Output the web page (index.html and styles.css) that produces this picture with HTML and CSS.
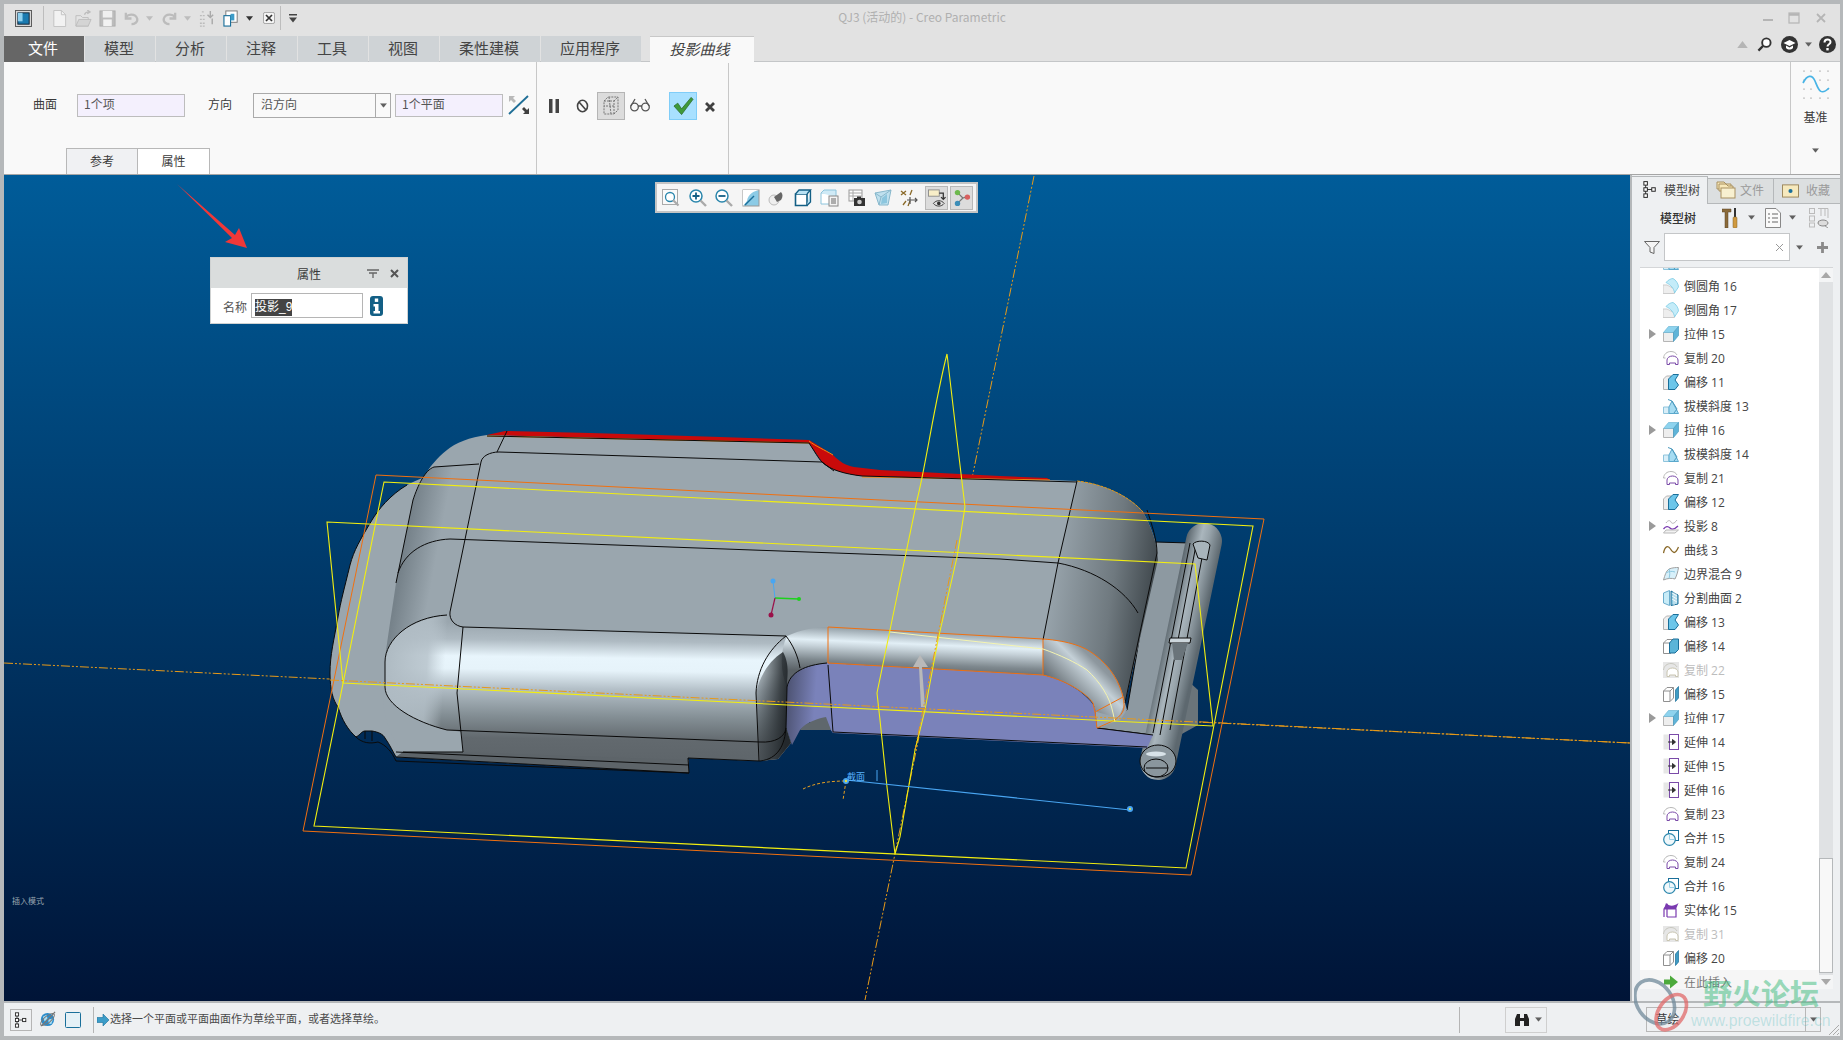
FILE: index.html
```html
<!DOCTYPE html>
<html lang="zh">
<head>
<meta charset="utf-8">
<title>QJ3 (活动的) - Creo Parametric</title>
<link rel="stylesheet" href="styles.css">
</head>
<body>
<svg class="defs" width="0" height="0">
  <defs>
    <symbol id="i-round" viewBox="0 0 16 16"><path d="M0 7V15.500H11.500V11C9 9.500 6 8 4 7Z" fill="#eeeeee" stroke="#cccccc"/><path d="M3 4.500C5 2 8 .5 10 .5C13 2 15.500 6 15.500 9L11.500 15C11 10.500 8 7 3 4.500Z" fill="#c4ecf9" stroke="#7ccbe4" stroke-width=".8"/></symbol>
    <symbol id="i-ext" viewBox="0 0 16 16"><path d="M.5 6.500V15.500H10.500V6.500Z" fill="#eeeeee" stroke="#b5b5b5"/><path d="M.5 6.500L5.500.5H15.500L10.500 6.500Z" fill="#8ed3ee" stroke="#6fb8d6" stroke-width=".7"/><path d="M10.500 6.500L15.500.5V9.500L10.500 15.500Z" fill="#5fb4d8" stroke="#4a9cc0" stroke-width=".7"/></symbol>
    <symbol id="i-copy" viewBox="0 0 16 16"><path d="M.5 8C1 4 4 1.500 8 1.500C11 1.500 13 3 14 5" fill="none" stroke="#b8b8b8"/><path d="M.5 8H2.500" stroke="#b8b8b8"/><path d="M4 14.500V10C4 7.500 7 6 9.500 6C12 6 15 7.500 15 10V14.500H12.500V13H6.500V14.500Z" fill="#fff" stroke="#7a4aa8"/></symbol>
    <symbol id="i-copyoff" viewBox="0 0 16 16"><rect width="16" height="16" fill="#e6e6e6"/><path d="M.5 8C1 4 4 1.500 8 1.500C11 1.500 13 3 14 5" fill="none" stroke="#c8c8c0"/><path d="M4 14.500V10C4 7.500 7 6 9.500 6C12 6 15 7.500 15 10V14.500H12.500V13H6.500V14.500Z" fill="#fff" stroke="#c8c4b0"/></symbol>
    <symbol id="i-off" viewBox="0 0 16 16"><path d="M.5 5L3.500 2H8V15.500H.5Z" fill="#eeeeee" stroke="#b5b5b5"/><path d="M5.500 5L10 .5L15.500 .5L12 6L15.500 11L12 15.500H5.500Z" fill="#6cc6ea" stroke="#1a6f9a"/></symbol>
    <symbol id="i-off2" viewBox="0 0 16 16"><path d="M.5 5L4 1.500H11V12L7.500 15.500H.5Z" fill="#fff" stroke="#909090"/><path d="M7.500 15.500V5H.5M7.500 5L11 1.500" fill="none" stroke="#909090"/><path d="M6.500 5L10 1H15.500V11.500L12 15H6.500Z" fill="#5ab4d8" stroke="#1a6f9a"/></symbol>
    <symbol id="i-off3" viewBox="0 0 16 16"><path d="M.5 5L4 1.500H10.500V12L7 15.500H.5Z" fill="#fff" stroke="#909090"/><path d="M7 15.500V5H.5M7 5L10.500 1.500" fill="none" stroke="#909090"/><path d="M12.500 4L15.500 .5V12L12.500 15.500Z" fill="#3f9cc4" stroke="#1a6f9a" stroke-width=".7"/></symbol>
    <symbol id="i-draft" viewBox="0 0 16 16"><path d="M.5 9H6V15.500H.5Z" fill="#d8eef8" stroke="#8ec4dc"/><path d="M6 15.500H15.500L9 3L6 9Z" fill="#a6dcf2" stroke="#5aa8cc"/><path d="M5 1.500L9 3L14 11L11 15" fill="none" stroke="#4a98bc"/></symbol>
    <symbol id="i-proj" viewBox="0 0 16 16"><path d="M3 5C5 2 7 2 8 4S11 6 14 2" fill="none" stroke="#b8b8b8"/><path d="M.5 11C3 8 5 8 7 10S11 12 15 8" fill="none" stroke="#7a3ab0" stroke-width="1.300"/><path d="M.5 15L3 12H15.500L12 15Z" fill="#f2f2f2" stroke="#b8b8b8"/></symbol>
    <symbol id="i-curve" viewBox="0 0 16 16"><path d="M.5 11C2 4 5 3 7.500 7S12 13 15.500 5" fill="none" stroke="#8a6a2a" stroke-width="1.300"/></symbol>
    <symbol id="i-blend" viewBox="0 0 16 16"><path d="M.5 14C2 9 3 5 6 3C10 1.500 13 1.500 15.500 1.500C15 5 14 9 12 13C9 12 5 12 .5 14Z" fill="#d8f0fa" stroke="#a0a0a0"/><path d="M6 3C7 6 7 9 6 12.500M12 6C9 5 6 5 3 7" fill="none" stroke="#8cc8e0"/></symbol>
    <symbol id="i-split" viewBox="0 0 16 16"><path d="M.5 3L6.500 .5V15.500L.5 13Z" fill="#c8ecf8" stroke="#6aaccc"/><path d="M8 1L15 5V14L8 15.500Z" fill="#8cc8e0" stroke="#1a6f9a"/><path d="M9 3L14 6M9 6L14 9M9 9L14 12M11 2V15M13 3V14" stroke="#fff" stroke-width=".8"/></symbol>
    <symbol id="i-trim" viewBox="0 0 16 16"><rect x=".5" y=".5" width="6" height="15" fill="#e6e6e6"/><rect x="6.500" y=".5" width="9" height="15" fill="#fff" stroke="#7a4aa8"/><path d="M5 8H12M9.500 5.500L12.500 8L9.500 10.500Z" fill="#333" stroke="#333"/></symbol>
    <symbol id="i-merge" viewBox="0 0 16 16"><rect x="5.500" y=".5" width="10" height="10" fill="#fff" stroke="#1a6f9a"/><circle cx="6.500" cy="9.500" r="5.800" fill="#f0f8fb" stroke="#2a86ac" stroke-width="1.200"/><path d="M6.500 4V9.500H12" fill="none" stroke="#9ad0e6"/></symbol>
    <symbol id="i-solid" viewBox="0 0 16 16"><path d="M1 15V7L4 3V15M1 7H13V15H4" fill="#fff" stroke="#7a3ab0" stroke-width="1.200"/><path d="M1 7L3 1C6 4 10 5 15.500 1L13 7Z" fill="#7a3ab0"/></symbol>
    <symbol id="i-insert" viewBox="0 0 16 16"><path d="M7 1.500L15 8L7 14.500V10.500H1V5.500H7Z" fill="#4caa3c"/></symbol>
    <symbol id="i-down" viewBox="0 0 8 5"><path d="M0 0H8L4 5Z" fill="#606060"/></symbol>
    <symbol id="i-tree" viewBox="0 0 16 20"><g fill="#fff" stroke="#222" stroke-width="1.100"><rect x="1" y="1" width="4" height="4"/><rect x="1" y="8" width="4" height="4"/><rect x="1" y="15" width="4" height="4"/><rect x="10" y="8" width="4" height="4"/></g><path d="M3 5V8M3 12V15M5 10H10" stroke="#222"/></symbol>
    <symbol id="i-folder" viewBox="0 0 20 18"><path d="M1 1H8L10 3H15V8H1Z" fill="#f8e8b8" stroke="#a89060"/><path d="M3 3H10L12 5H17V10H3Z" fill="#f8e8b8" stroke="#a89060"/><rect x="5" y="7" width="14" height="10" fill="#f8f0d0" stroke="#a89060"/></symbol>
  </defs>
</svg>

<div class="app">
  <header class="titlebar">
    <div class="quick">
      <svg class="ic18 qlogo" viewBox="0 0 18 18"><rect x=".5" y=".5" width="17" height="17" fill="#d8d8d8" stroke="#555"/><rect x="3" y="3" width="12" height="12" fill="#1a7ab0" stroke="#123"/><rect x="3" y="3" width="5" height="9" fill="#8fd0ee"/></svg>
      <span class="qsep"></span>
      <svg class="ic18" viewBox="0 0 18 18"><path d="M3 .5H11L15.500 5V17.500H3Z" fill="#f2f2f2" stroke="#c2c2c2"/><path d="M11 .5V5H15.500" fill="none" stroke="#c2c2c2"/></svg>
      <svg class="ic18" viewBox="0 0 18 18"><path d="M1 17V6H6L8 8H14V17Z" fill="#e4e4e4" stroke="#bdbdbd"/><path d="M1 17L4 10H17L14 17Z" fill="#d4d4d4" stroke="#bdbdbd"/><path d="M10 5C11 2 13 2 15 2M13 0L16 2L13 4" fill="none" stroke="#bdbdbd" stroke-width="1.300"/></svg>
      <svg class="ic18" viewBox="0 0 18 18"><rect x="1" y="1" width="16" height="16" fill="#bcbcbc" stroke="#adadad"/><rect x="4" y="1" width="10" height="7" fill="#efefef"/><rect x="4.500" y="10" width="9" height="7" fill="#f2f2f2"/></svg>
      <svg class="ic18" viewBox="0 0 18 18"><path d="M3 9C4 4 13 3 15 9C16 13 12 15 9 15M3 3V9H9" fill="none" stroke="#bcbcbc" stroke-width="2.400"/></svg>
      <svg class="ic8" viewBox="0 0 8 5"><path d="M0 0H8L4 5Z" fill="#bdbdbd"/></svg>
      <svg class="ic18" viewBox="0 0 18 18"><path d="M15 9C14 4 5 3 3 9C2 13 6 15 9 15M15 3V9H9" fill="none" stroke="#bcbcbc" stroke-width="2.400"/></svg>
      <svg class="ic8" viewBox="0 0 8 5"><path d="M0 0H8L4 5Z" fill="#bdbdbd"/></svg>
      <svg class="ic18" viewBox="0 0 18 18"><path d="M1 6H7M1 10H7M1 14H7M1 17H7M3 2H6" stroke="#bbb" stroke-width="1.400" stroke-dasharray="2 1"/><path d="M12 1V8M9 5L12 8L15 5M14 15V9" fill="none" stroke="#aaa" stroke-width="1.500"/></svg>
      <svg class="ic18" viewBox="0 0 18 18"><rect x="3" y="1" width="12" height="12" fill="#fff" stroke="#777"/><rect x="1" y="6" width="7" height="11" fill="#fff" stroke="#1a6f9a" stroke-width="1.200"/><rect x="8" y="4" width="4" height="7" fill="#3c9cc8"/></svg>
      <svg class="ic8" viewBox="0 0 8 5"><path d="M0 0H8L4 5Z" fill="#333"/></svg>
      <svg class="ic14" viewBox="0 0 14 14"><rect x=".5" y=".5" width="13" height="13" rx="2" fill="#f4f4f4" stroke="#999"/><path d="M3.500 3.500L10.500 10.500M10.500 3.500L3.500 10.500" stroke="#333" stroke-width="2"/></svg>
      <span class="qsep qsep-b"></span>
      <svg class="qmore" viewBox="0 0 8 9"><path d="M0 0H8V1.500H0ZM0 3.500H8L4 8.500Z" fill="#444"/></svg>
    </div>
    <div class="apptitle">QJ3 (活动的) - Creo Parametric</div>
    <div class="winctl">
      <svg class="ic12" viewBox="0 0 12 12"><path d="M2 8H12" stroke="#b5b5b5" stroke-width="2"/></svg>
      <svg class="ic12" viewBox="0 0 12 12"><rect x="1" y="1" width="10" height="10" fill="none" stroke="#b5b5b5" stroke-width="1.200"/><path d="M1 2.500H11" stroke="#b5b5b5" stroke-width="2.500"/></svg>
      <svg class="ic12" viewBox="0 0 12 12"><path d="M2 2L10 10M10 2L2 10" stroke="#b5b5b5" stroke-width="1.800"/></svg>
    </div>
  </header>

  <nav class="tabbar">
    <span class="tab tab-file">文件</span>
    <span class="tab">模型</span>
    <span class="tab">分析</span>
    <span class="tab">注释</span>
    <span class="tab">工具</span>
    <span class="tab">视图</span>
    <span class="tab tab-wide">柔性建模</span>
    <span class="tab tab-wide">应用程序</span>
    <span class="tab tab-active">投影曲线</span>
    <span class="tabtools">
      <svg class="tt-up" viewBox="0 0 12 8"><path d="M0 8L6 0L12 8Z" fill="#b5b5b5"/></svg>
      <svg class="tt-lens" viewBox="0 0 16 16"><circle cx="10" cy="6" r="4.500" fill="#fff" stroke="#333" stroke-width="2"/><path d="M6.500 9.500L1.500 14.500" stroke="#333" stroke-width="2.400"/></svg>
      <svg class="tt-cap" viewBox="0 0 17 17"><circle cx="8.500" cy="8.500" r="8.500" fill="#333"/><path d="M2.500 7L8.500 4L14.500 7L8.500 10Z" fill="#fff"/><path d="M5 9.500V12C7 14 10 14 12 12V9.500L8.500 11.500Z" fill="#fff"/></svg>
      <svg class="tt-ar" viewBox="0 0 8 5"><use href="#i-down"/></svg>
      <svg class="tt-help" viewBox="0 0 17 17"><circle cx="8.500" cy="8.500" r="8.500" fill="#333"/><path d="M5.500 6.500C5.500 2.500 11.500 2.500 11.500 6C11.500 8.500 8.500 8 8.500 10.500" fill="none" stroke="#fff" stroke-width="2"/><rect x="7.300" y="12" width="2.400" height="2.400" fill="#fff"/></svg>
    </span>
  </nav>

  <section class="ribbon">
    <div class="rgroup rg-main">
      <div class="controls">
        <span class="lbl lbl-a">曲面</span>
        <span class="field">1个项</span>
        <span class="lbl lbl-b">方向</span>
        <span class="select">沿方向<i class="sel-ar"><svg viewBox="0 0 8 5"><use href="#i-down"/></svg></i></span>
        <span class="field field-c">1个平面</span>
        <svg class="flip" viewBox="0 0 22 20"><path d="M20 1L1 19" stroke="#1f6e96" stroke-width="1.800"/><path d="M1 7V1H7L5 3L8 6L6 8L3 5Z" fill="#b9b9b9"/><path d="M21 13V19H15L17 17L14 14L16 12L19 15Z" fill="#404040"/></svg>
      </div>
      <div class="subtabs">
        <span class="subtab">参考</span>
        <span class="subtab subtab-on">属性</span>
      </div>
    </div>
    <div class="rgroup rg-actions">
      <svg class="a-pause" viewBox="0 0 12 14"><path d="M1 0H4.500V14H1ZM7.500 0H11V14H7.500Z" fill="#444"/></svg>
      <svg class="a-no" viewBox="0 0 13 14"><ellipse cx="6.500" cy="7" rx="5" ry="5.800" fill="none" stroke="#444" stroke-width="1.600"/><path d="M3 3L10 11" stroke="#444" stroke-width="1.600"/></svg>
      <span class="a-box"><svg viewBox="0 0 20 20"><path d="M3 5L7 1H17V14L13 18H3Z M3 5H13V18 M13 5L17 1 M8 1L10 18 M13 10L3 10" fill="none" stroke="#777" stroke-dasharray="2 1"/></svg></span>
      <svg class="a-glass" viewBox="0 0 20 14"><circle cx="4.500" cy="9" r="3.800" fill="none" stroke="#555" stroke-width="1.300"/><circle cx="15.500" cy="9" r="3.800" fill="none" stroke="#555" stroke-width="1.300"/><path d="M8 8H12M1 8L5 1M19 8L15 1" fill="none" stroke="#555" stroke-width="1.300"/></svg>
      <span class="a-ok"><svg viewBox="0 0 22 20"><path d="M1 10L5 7L9 13L19 1L21 3L9 19Z" fill="#3f9a3a" stroke="#2c6a2a" stroke-width=".8"/></svg></span>
      <svg class="a-x" viewBox="0 0 12 12"><path d="M2 2L10 10M10 2L2 10" stroke="#404040" stroke-width="2.800"/></svg>
    </div>
    <div class="rgroup rg-fill"></div>
    <div class="rg-datum">
      <svg class="datum-ic" viewBox="0 0 28 30"><g fill="#666"><circle cx="2" cy="1" r=".6"/><circle cx="9" cy="1" r=".6"/><circle cx="18" cy="1" r=".6"/><circle cx="26" cy="1" r=".6"/><circle cx="2" cy="10" r=".6"/><circle cx="18" cy="10" r=".6"/><circle cx="26" cy="10" r=".6"/><circle cx="2" cy="19" r=".6"/><circle cx="9" cy="19" r=".6"/><circle cx="26" cy="19" r=".6"/><circle cx="2" cy="28" r=".6"/><circle cx="9" cy="28" r=".6"/><circle cx="18" cy="28" r=".6"/><circle cx="26" cy="28" r=".6"/></g><path d="M1 13C5 5 10 4 13 11S18 27 27 18" fill="none" stroke="#48b4e6" stroke-width="1.700"/></svg>
      <span class="datum-lbl">基准</span>
      <svg class="datum-ar" viewBox="0 0 8 5"><use href="#i-down"/></svg>
    </div>
  </section>

  <main class="workspace">
    <div class="viewport">
      <svg class="scene" viewBox="4 175 1626 826">
        <defs>
          <linearGradient id="tube" gradientUnits="userSpaceOnUse" x1="600" y1="624" x2="598" y2="765"><stop offset="0" stop-color="#9aa6ae"/><stop offset=".12" stop-color="#aebac2"/><stop offset=".24" stop-color="#e8f5fc"/><stop offset=".33" stop-color="#e6f3fa"/><stop offset=".46" stop-color="#b4c0c8"/><stop offset=".66" stop-color="#838e94"/><stop offset=".82" stop-color="#62696e"/><stop offset="1" stop-color="#5d6469"/></linearGradient>
          <linearGradient id="tube2" gradientUnits="userSpaceOnUse" x1="930" y1="630" x2="928" y2="676"><stop offset="0" stop-color="#8a969e"/><stop offset=".32" stop-color="#e2eff6"/><stop offset=".45" stop-color="#c6d2d9"/><stop offset=".75" stop-color="#7e888e"/><stop offset="1" stop-color="#5a6166"/></linearGradient>
          <linearGradient id="tube3" gradientUnits="userSpaceOnUse" x1="1065" y1="695" x2="1110" y2="650"><stop offset="0" stop-color="#666e74"/><stop offset=".5" stop-color="#c4d0d7"/><stop offset=".7" stop-color="#8e989f"/><stop offset="1" stop-color="#7a848a"/></linearGradient>
          <linearGradient id="endR" gradientUnits="userSpaceOnUse" x1="1050" y1="560" x2="1158" y2="575"><stop offset="0" stop-color="#9aa6ae"/><stop offset=".6" stop-color="#6f797f"/><stop offset="1" stop-color="#3e464b"/></linearGradient>
          <linearGradient id="shoulder" gradientUnits="userSpaceOnUse" x1="400" y1="575" x2="432" y2="581"><stop offset="0" stop-color="#76828a"/><stop offset="1" stop-color="#9aa6ae"/></linearGradient>
          <linearGradient id="tubeL" gradientUnits="userSpaceOnUse" x1="385" y1="660" x2="445" y2="664"><stop offset="0" stop-color="#aebac2"/><stop offset=".7" stop-color="#b4c0c8" stop-opacity=".8"/><stop offset="1" stop-color="#c0ccd4" stop-opacity="0"/></linearGradient>
          <linearGradient id="tubeR" gradientUnits="userSpaceOnUse" x1="745" y1="700" x2="788" y2="703"><stop offset="0" stop-color="#3a4146" stop-opacity="0"/><stop offset=".8" stop-color="#2e3438" stop-opacity=".9"/><stop offset="1" stop-color="#23282c"/></linearGradient>
          <linearGradient id="purple" gradientUnits="userSpaceOnUse" x1="787" y1="700" x2="815" y2="702"><stop offset="0" stop-color="#4e5474"/><stop offset="1" stop-color="#7a82ba"/></linearGradient>
          <linearGradient id="pin" gradientUnits="userSpaceOnUse" x1="1163" y1="640" x2="1198" y2="648"><stop offset="0" stop-color="#5b666d"/><stop offset=".4" stop-color="#aab6bd"/><stop offset=".6" stop-color="#98a4ab"/><stop offset="1" stop-color="#5d686f"/></linearGradient>
        </defs>

        <g class="axis">
          <path d="M4 663L1630 743"/>
          <path d="M1034 176L865 1000"/>
        </g>

        <!-- hinge -->
        <path d="M1187 680L1198 690L1198 725L1180 735Z" fill="#6a747a"/>
        <path class="eg" d="M1156 542L1190 543L1153 735L1097 728L1127 710Z" fill="#8d99a1"/>
        <line x1="1204" y1="541" x2="1158" y2="762" stroke="url(#pin)" stroke-width="36" stroke-linecap="round"/>
        <path class="ln" d="M1190 543L1153 733M1196 545L1160 735M1204 547L1170 730"/>
        <path class="eg" d="M1193 544C1196 540 1208 540 1210 545L1207 560L1198 558Z" fill="#a8b4bb"/>
        <path class="eg" d="M1170 638H1191L1190 643H1169Z" fill="#ccd6dc"/>
        <path d="M1172 643H1188L1182 660H1174Z" fill="#6a747a"/>
        <ellipse class="eg" cx="1158" cy="761" rx="18" ry="16" fill="#8a969d"/>
        <ellipse cx="1156" cy="754" rx="10" ry="2.500" fill="#d8e2e8"/>
        <ellipse class="ln" cx="1156" cy="768" rx="12" ry="9"/>
        <path class="ln" d="M1146 768H1168"/>

        <!-- body -->
        <path fill="#9aa6ae" d="M487 435L809 443C815 452 818 458 822 462C830 470 845 474 862 476L1050 480L1077 481C1105 484 1130 497 1143 512C1150 525 1157 540 1158 560L1125 703L1127 710L1120 720L1097 728L1095 707L1087 693L1067 680L1043 675L827 663C805 665 790 672 787 687L786 727L791 743L778 759L760 761L688 758L689 773L396 757C393 752 390 745 385 738C383 734 378 732 372 731H365C362 731 360 735 356 737C348 730 342 720 338 707C333 700 330 690 330 673C330 655 334 640 338 617C341 600 344 590 350 565C354 550 360 540 372 520C378 510 390 495 407 485C412 482 418 480 425 477C428 468 437 458 447 450C455 443 470 437 487 435Z"/>
        <!-- purple underside -->
        <path fill="url(#purple)" d="M787 687C790 672 805 665 827 663L1043 675C1065 680 1085 692 1095 707L1097 728L1153 735L1147 748L833 733L826 724L810 722L800 730L792 745L786 727Z"/>
        <path class="ln" d="M833 732L1147 747M1097 728L1153 735"/>
        <path fill="#5f676c" d="M800 730C805 722 820 718 826 717L831 730Z"/>
        <!-- shoulder + right end -->
        <path fill="url(#shoulder)" d="M434 467C425 470 418 485 413 500L396 583C392 610 388 635 385 658C395 640 420 620 447 615L481 462Z"/>
        <path fill="url(#endR)" d="M1077 481C1105 484 1130 497 1143 512C1150 525 1157 540 1158 560L1125 703C1110 670 1075 645 1043 640L1058 563Z"/>
        <!-- left tube -->
        <path fill="url(#tube)" d="M385 662C385 640 410 617 449 616C450 625 455 627 463 627L787 636L786 727L791 743L778 759L760 761L688 758L689 773L396 757L403 752L463 752L461 732L447 730C415 722 385 705 385 687Z"/>
        <path fill="url(#tubeL)" d="M385 662C385 640 410 617 449 616L457 693L455 732L447 730C415 722 385 705 385 687Z"/>
        <path fill="#5d6469" d="M396 757L403 752H461L689 760V773Z"/>
        <path fill="#9aa6ae" d="M385 687C385 705 415 722 447 730L461 732L463 752H403C385 730 380 700 385 687Z"/>
        <!-- corner -->
        <path fill="url(#tube2)" d="M787 636C800 630 815 627 829 627L828 663C805 665 790 672 787 687C780 672 780 650 787 636Z"/>
        <path fill="url(#tubeR)" d="M756 693C760 675 770 660 783 652C790 665 787 675 787 687L786 727L791 743L778 759L760 761Z"/>
        <!-- right tube -->
        <path fill="url(#tube2)" d="M828 627L1043 639L1043 675L827 663Z"/>
        <path fill="url(#tube3)" d="M1043 639C1070 641 1085 647 1095 655C1110 666 1120 680 1125 703L1118 718L1097 712L1093 703C1085 692 1065 680 1043 675Z"/>
        <!-- red band -->
        <path fill="#c90a0a" d="M487 435L505 431L590 433L657 435L720 437L809 440C818 445 825 450 833 455C840 462 845 465 854 467L880 470L1000 476L1047 478L1050 480L862 476C845 474 830 470 822 462L809 443Z"/>
        <path d="M487 436L809 443M809 441C815 446 825 450 833 455M862 477L1050 480" fill="none" stroke="#ee8a10"/>
        <path d="M1077 481C1105 484 1130 497 1143 512" fill="none" stroke="#e8980e" stroke-dasharray="3 1"/>

        <!-- model edges -->
        <g class="ln">
          <path d="M507 431L497 452"/>
          <path d="M809 443C815 452 818 458 822 462C830 470 845 474 862 476M487 436L809 443"/>
          <path d="M862 476L1077 482M822 462L834 471"/>
          <path d="M499 452L822 462"/>
          <path d="M499 452C490 452 482 456 481 462L450 612C449 620 455 626 463 627L786 636"/>
          <path d="M479 464L434 467C425 470 418 485 413 500L396 583"/>
          <path d="M398 573C405 552 425 540 450 539L1000 559L1058 563C1095 570 1125 590 1138 613"/>
          <path d="M1077 481L1058 563L1043 640"/>
          <path d="M447 615C410 617 385 640 385 662V687C385 705 415 722 447 730L760 742C775 743 785 737 786 728"/>
          <path d="M463 627L457 693L463 752H403"/>
          <path d="M786 636C768 650 757 670 756 693L759 761"/>
          <path d="M786 636C793 645 798 656 800 668"/>
          <path d="M787 687C790 672 805 665 827 663M787 687L786 727C785 745 778 759 760 761L688 758L689 773L396 757C393 752 390 745 385 738C383 734 378 732 372 731H365C362 731 360 735 356 737C348 730 342 720 338 707"/>
          <path d="M828 665L833 732"/>
          <path d="M396 752L689 765M365 731V739M372 731V741M356 737C362 743 370 744 378 742C386 745 392 752 396 761L689 773"/>
          <path d="M338 707C333 700 330 690 330 673C330 655 334 640 338 617C341 600 344 590 350 565C354 550 360 540 372 520C378 510 390 495 407 485"/>
          <path d="M1147 510C1152 525 1157 540 1157 553L1125 703" stroke-width="1.500"/>
        </g>

        <!-- orange on tube -->
        <g class="org">
          <path d="M828 627L1043 639C1070 641 1085 647 1095 655C1110 666 1120 683 1123 697C1125 708 1125 712 1115 720L1097 728L1095 712L1123 697"/>
          <path d="M828 663L1043 675C1065 680 1085 692 1093 703L1095 712"/>
          <path d="M828 627V663M1043 639V675"/>
        </g>
        <path d="M890 632L1043 649C1060 655 1075 662 1087 670C1100 682 1110 697 1113 713L1115 722" fill="none" stroke="#f4f4b0"/>

        <!-- grey arrow -->
        <path d="M925 707L922 667H928L920 655L913 667H919L921 707Z" fill="#b9b9b9"/>

        <!-- planes -->
        <path class="org" d="M376 475L1264 519L1191 875L303 831Z"/>
        <path class="yel" d="M384 482L1253 526L1186 868L314 826Z"/>
        <path class="yel" d="M327 522L1195 564L1213 726L343 683Z"/>
        <path class="yel" d="M947 354C935 400 925 470 917 500L890 630L877 693L880 720L887 787L895 854L900 837L915 750L925 710L938 640L957 557L965 507L957 440Z"/>
        <path class="axis axis-over" d="M330 680L1630 743M957 540L915 750"/>

        <!-- sketch helpers -->
        <path d="M846 780L1130 810" fill="none" stroke="#49a6f2" stroke-width="1.100"/>
        <path d="M803 789C815 783 830 781 846 781M846 781L843 800" fill="none" stroke="#e8a020" stroke-dasharray="3 2"/>
        <circle cx="846" cy="781" r="3" fill="#49a6f2"/><circle cx="846" cy="781" r="1.200" fill="#e8e040"/>
        <circle cx="1130" cy="809" r="3" fill="#49a6f2"/><circle cx="1130" cy="809" r="1.100" fill="#e8e040"/>
        <path d="M877 770V781" stroke="#49a6f2"/>
        <text class="lbltxt" x="847" y="780">截面</text>

        <!-- coordinate system -->
        <path d="M775 598L773 581" stroke="#49a6f2" stroke-width="1"/>
        <path d="M775 598L799 599" stroke="#1dd11d" stroke-width="1.500"/>
        <path d="M775 598L771 615" stroke="#9a1048" stroke-width="1.200"/>
        <circle cx="773" cy="581" r="2.500" fill="#49a6f2"/>
        <circle cx="799" cy="599" r="2" fill="#1dd11d"/>
        <circle cx="771" cy="615" r="2.500" fill="#9a1048"/>
      </svg>

      <svg class="redarrow" viewBox="0 0 74 70"><path d="M2 2L60 53L64 46L72 66L50 60L57 56Z" fill="#f03838"/></svg>

      <div class="viewbar">
        <span class="vb"><svg viewBox="0 0 18 18"><rect x=".5" y=".5" width="15" height="15" fill="#fafafa" stroke="#aaa"/><circle cx="8" cy="8" r="4.500" fill="#fff" stroke="#2a86ac" stroke-width="1.300"/><path d="M11 11L16.500 16.500" stroke="#aaa" stroke-width="2.200"/></svg></span>
        <span class="vb"><svg viewBox="0 0 18 18"><circle cx="7" cy="7" r="6" fill="#fff" stroke="#2a86ac" stroke-width="1.500"/><path d="M7 3.500V10.500M3.500 7H10.500" stroke="#135f85" stroke-width="1.800"/><path d="M11.500 11.500L17 17" stroke="#aaa" stroke-width="2.400"/></svg></span>
        <span class="vb"><svg viewBox="0 0 18 18"><circle cx="7" cy="7" r="6" fill="#fff" stroke="#2a86ac" stroke-width="1.500"/><path d="M3.500 7H10.500" stroke="#135f85" stroke-width="1.800"/><path d="M11.500 11.500L17 17" stroke="#aaa" stroke-width="2.400"/></svg></span>
        <span class="vb"><svg viewBox="0 0 18 18"><rect x="1" y="1" width="16" height="16" fill="#8ccbe6" stroke="#999"/><path d="M1 1H17C12 2 6 5 5 12L1 17Z" fill="#fff"/><path d="M3 16L12 7" stroke="#1a6f9a" stroke-width="1.500"/></svg></span>
        <span class="vb vb-m"><svg viewBox="0 0 20 18"><circle cx="7" cy="11" r="5" fill="#eee" stroke="#bbb"/><path d="M7 8L14 3C16 5 16 8 14 11L10 13Z" fill="#666"/></svg></span>
        <span class="vb vb-m"><svg viewBox="0 0 20 18"><path d="M1.500 5H13V16.500H1.500Z" fill="#fff" stroke="#135f85" stroke-width="1.600"/><path d="M1.500 5L5 1H16.500L13 5M13 16.500L16.500 13V1" fill="#b8e2f4" stroke="#135f85" stroke-width="1.300"/></svg></span>
        <span class="vb vb-m"><svg viewBox="0 0 20 18"><path d="M1 4H13V15H1Z" fill="#fff" stroke="#8cc4dc"/><path d="M1 4L4 1H16V8" fill="#cfeaf6" stroke="#8cc4dc"/><rect x="9" y="7" width="9" height="10" fill="#f4f4f4" stroke="#888"/><path d="M11 10H16M11 12H16M11 14H16" stroke="#666"/></svg></span>
        <span class="vb"><svg viewBox="0 0 18 18"><rect x="1" y="1" width="13" height="11" fill="#fff" stroke="#999"/><path d="M1 4H14M1 7H14M5 1V12" stroke="#aaa"/><rect x="6" y="9" width="11" height="8" fill="#333"/><rect x="9" y="7.500" width="4" height="2" fill="#333"/><circle cx="11.500" cy="13" r="2.300" fill="#ccc"/></svg></span>
        <span class="vb"><svg viewBox="0 0 18 18"><path d="M1 4L17 1L14 16H5Z" fill="#bfe0ee" stroke="#88b8cc"/><path d="M1 4L7 8L17 1M7 8L5 16" fill="none" stroke="#88b8cc"/><path d="M8 9L13 5V14L7 15Z" fill="#8cc6de"/></svg></span>
        <span class="vb vb-m"><svg viewBox="0 0 20 18"><path d="M1 2L6 6M6 2L1 6M12 1L10 6M3 16L6 12M8 17L10 12" stroke="#8a6a2a" stroke-width="1.300"/><path d="M10 8V15M7 11H17M15 9L17 11L15 13" fill="none" stroke="#555" stroke-width="1.200"/></svg></span>
        <span class="vb vb-box"><svg viewBox="0 0 20 20"><rect x=".5" y="1" width="12" height="7" fill="#f8eec8" stroke="#8a8a8a"/><path d="M12.500 4.500H17V11M14.500 9L17 11.500L19.500 9" fill="none" stroke="#333" stroke-width="1.400"/><path d="M6 16C9 12 15 12 18 16C15 20 9 20 6 16Z" fill="#ddd" stroke="#333"/><circle cx="12" cy="16" r="2" fill="#333"/></svg></span>
        <span class="vb vb-box vb-box2"><svg viewBox="0 0 20 20"><path d="M5 4L11 10L14 9M11 10L5 16" fill="none" stroke="#777" stroke-width="1.300"/><circle cx="5" cy="4" r="3" fill="#6cb84c"/><circle cx="5" cy="16" r="3" fill="#3c8eb8"/><circle cx="16" cy="9" r="3" fill="#d86060"/></svg></span>
      </div>

      <div class="dialog">
        <div class="dlg-head">
          <span class="dlg-title">属性</span>
          <svg class="dlg-pin" viewBox="0 0 12 9"><path d="M0 1H12M2 4H10M6 4V9" stroke="#666" stroke-width="1.300"/></svg>
          <svg class="dlg-x" viewBox="0 0 9 9"><path d="M1 1L8 8M8 1L1 8" stroke="#555" stroke-width="2"/></svg>
        </div>
        <div class="dlg-body">
          <span class="dlg-lbl">名称</span>
          <span class="dlg-input"><span class="dlg-sel">投影_9</span></span>
          <svg class="dlg-info" viewBox="0 0 13 20"><rect width="13" height="20" rx="3" fill="#135f85"/><rect x="4.800" y="2.500" width="3.400" height="3.400" fill="#fff"/><path d="M3.500 8H8.500V15H10V17.500H3.500V15H5V10.500H3.500Z" fill="#fff"/></svg>
        </div>
      </div>

      <span class="modetxt">插入模式</span>
    </div>

    <aside class="panel">
      <div class="ptabs">
        <span class="ptab ptab-on"><svg class="pt-ic" viewBox="0 0 16 20"><use href="#i-tree"/></svg>模型树</span>
        <span class="ptab ptab-b"><svg class="pt-ic2" viewBox="0 0 20 18"><use href="#i-folder"/></svg>文件</span>
        <span class="ptab ptab-c"><svg class="pt-ic3" viewBox="0 0 18 16"><rect x=".5" y="2" width="17" height="13" fill="#f6e9bd" stroke="#9a8458"/><circle cx="9" cy="8.500" r="2.200" fill="#1a6f9a"/></svg>收藏</span>
      </div>
      <div class="prow">
        <span class="prow-title">模型树</span>
        <svg class="pi-tools" viewBox="0 0 18 20"><path d="M0 1H9V4H6V20H3V4H0Z" fill="#8a6a3a" stroke="#5a4424" stroke-width=".5"/><rect x="12" y="0" width="2" height="9" fill="#333"/><rect x="11" y="9" width="4" height="11" rx="1" fill="#d09a40" stroke="#80602a" stroke-width=".5"/></svg>
        <svg class="pi-ar pi-ar1" viewBox="0 0 8 5"><use href="#i-down"/></svg>
        <svg class="pi-list" viewBox="0 0 16 20"><path d="M.5 .5H11L15.500 5V19.500H.5Z" fill="#fafafa" stroke="#888"/><path d="M3 6H5M7 6H13M3 10H5M7 10H13M3 14H5M7 14H13" stroke="#666"/></svg>
        <svg class="pi-ar pi-ar2" viewBox="0 0 8 5"><use href="#i-down"/></svg>
        <svg class="pi-show" viewBox="0 0 20 20"><g fill="none" stroke="#bbb"><rect x=".5" y=".5" width="5" height="5"/><rect x=".5" y="8" width="5" height="5"/><rect x=".5" y="15" width="5" height="4"/><path d="M9 .5H19V10M12 .5V8M16 .5V8"/></g><path d="M9 13L19 20" stroke="#999"/><ellipse cx="14" cy="15" rx="5" ry="3" fill="#ddd" stroke="#888"/></svg>
      </div>
      <div class="pfilter">
        <svg class="pf-fun" viewBox="0 0 16 13"><path d="M.5 .5H15.500L10 6.500V12.500L6 11V6.500Z" fill="#f4f4f4" stroke="#666"/></svg>
        <span class="pf-input"><svg viewBox="0 0 9 9"><path d="M1 1L8 8M8 1L1 8" stroke="#999" stroke-width="1"/></svg></span>
        <svg class="pf-ar" viewBox="0 0 8 5"><use href="#i-down"/></svg>
        <svg class="pf-plus" viewBox="0 0 11 11"><path d="M5.500 0V11M0 5.500H11" stroke="#8a8a8a" stroke-width="2.800"/></svg>
      </div>
      <div class="treewrap">
        <div class="tree">
          <ul class="rows">
            <li class="row"><svg class="ti"><use href="#i-draft"/></svg><span>拔模斜度 12</span></li>
            <li class="row"><svg class="ti"><use href="#i-round"/></svg><span>倒圆角 16</span></li>
            <li class="row"><svg class="ti"><use href="#i-round"/></svg><span>倒圆角 17</span></li>
            <li class="row row-x"><svg class="ti"><use href="#i-ext"/></svg><span>拉伸 15</span></li>
            <li class="row"><svg class="ti"><use href="#i-copy"/></svg><span>复制 20</span></li>
            <li class="row"><svg class="ti"><use href="#i-off"/></svg><span>偏移 11</span></li>
            <li class="row"><svg class="ti"><use href="#i-draft"/></svg><span>拔模斜度 13</span></li>
            <li class="row row-x"><svg class="ti"><use href="#i-ext"/></svg><span>拉伸 16</span></li>
            <li class="row"><svg class="ti"><use href="#i-draft"/></svg><span>拔模斜度 14</span></li>
            <li class="row"><svg class="ti"><use href="#i-copy"/></svg><span>复制 21</span></li>
            <li class="row"><svg class="ti"><use href="#i-off"/></svg><span>偏移 12</span></li>
            <li class="row row-x"><svg class="ti"><use href="#i-proj"/></svg><span>投影 8</span></li>
            <li class="row"><svg class="ti"><use href="#i-curve"/></svg><span>曲线 3</span></li>
            <li class="row"><svg class="ti"><use href="#i-blend"/></svg><span>边界混合 9</span></li>
            <li class="row"><svg class="ti"><use href="#i-split"/></svg><span>分割曲面 2</span></li>
            <li class="row"><svg class="ti"><use href="#i-off"/></svg><span>偏移 13</span></li>
            <li class="row"><svg class="ti"><use href="#i-off2"/></svg><span>偏移 14</span></li>
            <li class="row row-off"><svg class="ti"><use href="#i-copyoff"/></svg><span>复制 22</span></li>
            <li class="row"><svg class="ti"><use href="#i-off3"/></svg><span>偏移 15</span></li>
            <li class="row row-x"><svg class="ti"><use href="#i-ext"/></svg><span>拉伸 17</span></li>
            <li class="row"><svg class="ti"><use href="#i-trim"/></svg><span>延伸 14</span></li>
            <li class="row"><svg class="ti"><use href="#i-trim"/></svg><span>延伸 15</span></li>
            <li class="row"><svg class="ti"><use href="#i-trim"/></svg><span>延伸 16</span></li>
            <li class="row"><svg class="ti"><use href="#i-copy"/></svg><span>复制 23</span></li>
            <li class="row"><svg class="ti"><use href="#i-merge"/></svg><span>合并 15</span></li>
            <li class="row"><svg class="ti"><use href="#i-copy"/></svg><span>复制 24</span></li>
            <li class="row"><svg class="ti"><use href="#i-merge"/></svg><span>合并 16</span></li>
            <li class="row"><svg class="ti"><use href="#i-solid"/></svg><span>实体化 15</span></li>
            <li class="row row-off"><svg class="ti"><use href="#i-copyoff"/></svg><span>复制 31</span></li>
            <li class="row"><svg class="ti"><use href="#i-off3"/></svg><span>偏移 20</span></li>
            <li class="row row-ins"><svg class="ti"><use href="#i-insert"/></svg><span>在此插入</span></li>
          </ul>
        </div>
        <div class="scroll">
          <span class="sb-btn"><svg viewBox="0 0 10 6"><path d="M0 6L5 0L10 6Z" fill="#a8a8a8"/></svg></span>
          <span class="sb-track"><span class="sb-thumb"></span></span>
          <span class="sb-btn"><svg viewBox="0 0 10 6"><path d="M0 0L5 6L10 0Z" fill="#a8a8a8"/></svg></span>
        </div>
      </div>
    </aside>
  </main>

  <footer class="status">
    <span class="st-box"><svg viewBox="0 0 16 20"><use href="#i-tree"/></svg></span>
    <svg class="st-globe" viewBox="0 0 18 18"><circle cx="9" cy="9" r="7" fill="#2a8ccc"/><path d="M4 6L8 4L9 8L6 11ZM10 9L15 8L13 14L10 13Z" fill="#a8dcf2"/><path d="M2 16C5 13 13 6 17 1" fill="none" stroke="#777" stroke-width="1.300"/><ellipse cx="9" cy="9" rx="9" ry="3.500" transform="rotate(-40 9 9)" fill="none" stroke="#777"/></svg>
    <svg class="st-sq" viewBox="0 0 16 16"><rect x=".5" y=".5" width="15" height="15" rx="1" fill="#e4f0f6" stroke="#1a6f9a"/></svg>
    <span class="st-sep"></span>
    <svg class="st-arrow" viewBox="0 0 12 12"><path d="M0 3.500H6V0L12 6L6 12V8.500H0Z" fill="#3c9cc8" stroke="#1a6f9a" stroke-width=".6"/></svg>
    <span class="st-msg">选择一个平面或平面曲面作为草绘平面，或者选择草绘。</span>
    <span class="st-sep st-sep-r"></span>
    <span class="st-find">
      <svg class="st-bin" viewBox="0 0 16 14"><path d="M1 6L3 1H6V5H10V1H13L15 6V13H10V8H6V13H1Z" fill="#222"/></svg>
      <svg class="st-ar" viewBox="0 0 8 5"><use href="#i-down"/></svg>
    </span>
    <span class="st-select">草绘<i class="st-sel-ar"><svg viewBox="0 0 8 5"><use href="#i-down"/></svg></i></span>
    <svg class="st-grip" viewBox="0 0 12 12"><path d="M11 1L1 11M11 5L5 11M11 9L9 11" stroke="#aaa"/></svg>
  </footer>

  <div class="wm">
    <svg class="wm-logo" viewBox="0 0 56 56"><ellipse cx="20" cy="24" rx="17" ry="23" transform="rotate(-35 20 24)" fill="none" stroke="#708a9a" stroke-width="3.500" opacity=".75"/><ellipse cx="36" cy="34" rx="12" ry="19" transform="rotate(35 36 34)" fill="none" stroke="#e06a6a" stroke-width="3.500" opacity=".75"/></svg>
    <span class="wm-cn">野火论坛</span>
    <span class="wm-en">www.proewildfire.cn</span>
  </div>
</div>
</body>
</html>
```

FILE: styles.css
```css
* { box-sizing: border-box; }
html, body { margin: 0; padding: 0; }
body { width: 1843px; height: 1040px; overflow: hidden; background: #b5b8ba; font-family: "Noto Sans CJK SC", "Liberation Sans", sans-serif; font-size: 12px; color: #3a3a3a; }
.defs { position: absolute; }
svg { display: block; flex: none; }
.app { position: relative; width: 1843px; height: 1040px; padding: 4px 3px 4px 4px; display: flex; flex-direction: column; }

/* title */
.titlebar { height: 32px; background: #e2e2e2; display: grid; grid-template-columns: 1fr auto 1fr; align-items: center; flex: none; padding-bottom: 4px; }
.quick { display: flex; align-items: center; padding-left: 11px; }
.ic18 { width: 17px; height: 17px; margin-right: 7px; }
.ic8 { width: 7px; height: 5px; margin-right: 8px; margin-left: -1px; }
.ic12 { width: 12px; height: 12px; }
.ic14 { width: 12px; height: 12px; margin-right: 5px; margin-left: 2px; }
.qlogo { margin-right: 11px; }
.qsep { width: 1px; height: 24px; background: #bdbdbd; margin-right: 7px; }
.qsep-b { margin-right: 8px; margin-left: 0; }
.qmore { width: 8px; height: 9px; }
.apptitle { color: #b0b0b0; font-size: 12px; line-height: 16px; margin-bottom: 2px; }
.winctl { display: flex; justify-content: flex-end; gap: 15px; padding-right: 13px; }

/* tabs */
.tabbar { height: 26px; background: #e2e2e2; display: flex; gap: 1px; flex: none; border-bottom: 1px solid #c4c6c8; }
.tab { width: 70px; height: 26px; background: #cfd3d6; color: #444; font-size: 15px; line-height: 24px; text-align: center; flex: none; padding-right: 2px; }
.tab-file { width: 80px; background: #666; color: #fff; }
.tab-wide { width: 100px; }
.tab-active { width: 104px; height: 27px; margin-left: 8px; background: #f9f9f9; font-style: italic; position: relative; border-top: 1px solid #c8c8c8; padding-right: 5px; }
.tabtools { margin-left: auto; display: flex; align-items: center; height: 18px; margin-top: -1px; }
.tt-up { width: 11px; height: 7px; margin-right: 9px; }
.tt-lens { width: 15px; height: 15px; margin-right: 9px; }
.tt-cap { width: 17px; height: 17px; margin-right: 7px; }
.tt-ar { width: 7px; height: 5px; margin-right: 7px; }
.tt-help { width: 17px; height: 17px; margin-right: 4px; }

/* ribbon */
.ribbon { height: 113px; background: #f9f9f9; border-bottom: 1px solid #a6a6a6; display: flex; flex: none; }
.rgroup { border-right: 1px solid #c8c8c8; height: 100%; }
.rg-main { width: 533px; display: flex; flex-direction: column; flex: none; }
.controls { display: flex; align-items: center; height: 26px; margin-top: 30px; padding-left: 29px; }
.lbl { width: 24px; white-space: nowrap; line-height: 16px; margin-bottom: 2px; }
.lbl-b { margin-left: 23px; margin-right: 21px; }
.lbl-a { margin-right: 20px; }
.field { width: 108px; height: 23px; background: #f4f0fd; border: 1px solid #bdbdbd; padding-left: 6px; line-height: 18px; color: #555; }
.field-c { margin-left: 4px; }
.select { width: 138px; height: 25px; background: #f9f9f9; border: 1px solid #aaa; padding-left: 7px; line-height: 20px; position: relative; color: #555; display: flex; justify-content: space-between; }
.sel-ar { width: 15px; border-left: 1px solid #aaa; display: flex; align-items: center; justify-content: center; }
.sel-ar svg { width: 7px; height: 5px; }
.flip { width: 22px; height: 20px; margin-left: 5px; }
.subtabs { display: flex; margin-top: auto; padding-left: 62px; }
.subtab { width: 72px; height: 26px; background: #f0f1f3; border: 1px solid #b8b8b8; border-bottom: 0; text-align: center; line-height: 24px; }
.subtab-on { background: #fff; border-left: 0; }
.rg-actions { width: 192px; display: flex; align-items: flex-start; padding-top: 30px; padding-left: 11px; flex: none; }
.a-pause { width: 12px; height: 14px; margin-top: 7px; }
.a-no { width: 13px; height: 14px; margin: 7px 0 0 16px; }
.a-box { width: 28px; height: 28px; margin-left: 8px; background: #dcdcdc; border: 1px solid #b5b5b5; padding: 3px; }
.a-box svg { width: 20px; height: 20px; }
.a-glass { width: 20px; height: 14px; margin: 6px 0 0 5px; }
.a-ok { width: 28px; height: 28px; margin-left: 19px; background: #a8e0ff; border: 1px solid #80cdf8; padding: 3px; }
.a-ok svg { width: 21px; height: 20px; }
.a-x { width: 12px; height: 12px; margin: 9px 0 0 7px; }
.rg-fill { flex: 1; border-right: 1px solid #c8c8c8; }
.rg-datum { width: 49px; display: flex; flex-direction: column; align-items: center; flex: none; }
.datum-ic { width: 28px; height: 30px; margin-top: 8px; }
.datum-lbl { margin-top: 8px; line-height: 18px; }
.datum-ar { width: 7px; height: 5px; margin-top: 22px; }

/* workspace */
.workspace { height: 826px; display: flex; flex: none; }
.viewport { position: relative; width: 1626px; height: 826px; background: linear-gradient(#005c99, #001437); overflow: hidden; flex: none; }
.scene { position: absolute; left: 0; top: 0; width: 1626px; height: 826px; }
.ln, .ln path { fill: none; stroke: #0a0a0a; stroke-width: 1; }
.eg { stroke: #0a0a0a; stroke-width: 1; }
.org, .org path { fill: none; stroke: #f07010; stroke-width: 1; }
.yel { fill: none; stroke: #f2ee10; stroke-width: 1.100; }
.axis, .axis path, .axis-over { fill: none; stroke: #e89a18; stroke-width: 1; stroke-dasharray: 9 2 2 2 2 2; }
.lbltxt { fill: #5ab4ff; font-size: 9px; }
.redarrow { position: absolute; left: 171px; top: 7px; width: 74px; height: 70px; }

.viewbar { position: absolute; left: 651px; top: 7px; width: 323px; height: 31px; background: #f5f5f5; border: 2px solid #c4c4c4; display: flex; align-items: center; padding-left: 1px; }
.vb { width: 26.500px; height: 25px; flex: none; display: flex; align-items: center; justify-content: center; }
.vb svg { width: 18px; height: 18px; }
.vb-m svg { width: 20px; height: 18px; }
.vb-box { background: #dcdcdc; border: 1px solid #b8b8b8; width: 23px; height: 24px; margin-left: 2px; }
.vb-box2 { margin-left: 2px; }

.dialog { position: absolute; left: 206px; top: 82px; width: 198px; height: 67px; background: #fff; border: 1px solid #cfd2d2; display: flex; flex-direction: column; }
.dlg-head { height: 30px; background: #dadddd; display: flex; align-items: center; flex: none; }
.dlg-title { margin-left: 86px; }
.dlg-pin { width: 12px; height: 9px; margin-left: 46px; }
.dlg-x { width: 9px; height: 9px; margin-left: 11px; }
.dlg-body { display: flex; align-items: center; flex: 1; padding-left: 12px; }
.dlg-lbl { width: 24px; margin-right: 4px; color: #555; white-space: nowrap; margin-top: 2px; }
.dlg-input { width: 112px; height: 25px; border: 1px solid #b5b5b5; padding: 3px; }
.dlg-sel { display: inline-block; height: 17px; line-height: 16px; background: #444; color: #fff; white-space: nowrap; font-family: "Liberation Sans", "Noto Sans CJK SC", sans-serif; }
.dlg-info { width: 13px; height: 20px; margin-left: 7px; }
.modetxt { position: absolute; left: 8px; top: 721px; font-size: 8px; color: #9aa6b0; line-height: 10px; }

/* panel */
.panel { width: 208px; margin-left: 2px; background: #eef0f2; display: flex; flex-direction: column; flex: none; }
.ptabs { display: flex; height: 29px; align-items: flex-end; flex: none; overflow: hidden; }
.ptab { display: flex; align-items: center; height: 26px; background: #dcdfe0; color: #9a9a9a; border: 1px solid #b5b8ba; border-left: 0; white-space: nowrap; overflow: hidden; line-height: 16px; padding-bottom: 2px; }
.ptab-on { height: 28px; width: 76px; background: #eef0f2; color: #444; border-bottom: 0; padding-left: 11px; }
.pt-ic { width: 14px; height: 19px; margin-right: 7px; }
.ptab-b { width: 66px; padding-left: 8px; }
.pt-ic2 { width: 20px; height: 18px; margin-right: 4px; }
.ptab-c { width: 66px; padding-left: 8px; border-right: 0; }
.pt-ic3 { width: 17px; height: 15px; margin-right: 7px; }
.prow { height: 27px; display: flex; align-items: center; flex: none; padding-left: 28px; }
.prow-title { font-weight: 500; width: 36px; white-space: nowrap; margin-right: 26px; color: #333; }
.pi-tools { width: 18px; height: 20px; }
.pi-ar { width: 7px; height: 5px; }
.pi-ar1 { margin: 0 10px 0 8px; }
.pi-list { width: 16px; height: 20px; }
.pi-ar2 { margin: 0 13px 0 8px; }
.pi-show { width: 20px; height: 20px; }
.pfilter { height: 30px; margin-top: 1px; display: flex; align-items: center; flex: none; padding-left: 12px; }
.pf-fun { width: 16px; height: 13px; margin-right: 4px; }
.pf-input { width: 126px; height: 28px; background: #fff; border: 1px solid #c4c6c8; display: flex; align-items: center; justify-content: flex-end; padding-right: 5px; }
.pf-input svg { width: 9px; height: 9px; }
.pf-ar { width: 7px; height: 5px; margin: 0 14px 0 6px; }
.pf-plus { width: 11px; height: 11px; }
.treewrap { margin: 5px 7px 0 8px; height: 734px; display: flex; flex: none; border-top: 1px solid #d4d6d8; }
.tree { width: 179px; background: #fff; overflow: hidden; flex: none; height: 721px; }
.rows { list-style: none; margin: -18px 0 0; padding: 0; }
.row { height: 24px; display: flex; align-items: center; padding-left: 23px; font-family: "Open Sans", "Noto Sans CJK SC", sans-serif; font-size: 12px; color: #444; position: relative; white-space: nowrap; }
.ti { width: 16px; height: 16px; margin-right: 5px; }
.row-off { color: #bdbdbd; }
.row-ins { color: #777; background: #f6f6f6; }
.row-x::before { content: ""; position: absolute; left: 9px; top: 7px; border-left: 7px solid #9a9a9a; border-top: 5px solid transparent; border-bottom: 5px solid transparent; }
.scroll { width: 14px; height: 721px; background: #e0e2e4; display: flex; flex-direction: column; flex: none; }
.sb-btn { height: 14px; background: #f4f5f6; display: flex; align-items: center; justify-content: center; flex: none; }
.sb-btn svg { width: 10px; height: 6px; }
.sb-track { flex: 1; display: flex; flex-direction: column; justify-content: flex-end; padding-bottom: 2px; }
.sb-thumb { display: block; height: 115px; background: #f8f8f8; border: 1px solid #b5b8ba; }

/* status */
.status { height: 33px; margin-top: 2px; background: #eef0f2; display: flex; align-items: center; flex: none; position: relative; padding-left: 6px; }
.st-box { width: 22px; height: 22px; border: 1px solid #b5b5b5; padding: 2px 3px; }
.st-box svg { width: 14px; height: 16px; }
.st-globe { width: 17px; height: 17px; margin-left: 7px; }
.st-sq { width: 16px; height: 16px; margin-left: 9px; }
.st-sep { width: 1px; height: 26px; background: #b5b5b5; margin-left: 12px; }
.st-arrow { width: 12px; height: 12px; margin-left: 3px; }
.st-msg { font-size: 11px; line-height: 14px; color: #4a4a4a; margin: 0 0 3px 1px; white-space: nowrap; width: 275px; }
.st-sep-r { margin-left: 1074px; height: 26px; }
.st-find { width: 43px; height: 26px; margin-left: 45px; display: flex; align-items: center; justify-content: flex-end; gap: 5px; border: 1px solid #cfcfcf; padding-right: 4px; }
.st-bin { width: 16px; height: 14px; }
.st-ar { width: 7px; height: 5px; }
.st-select { width: 177px; height: 25px; margin-left: 99px; border: 1px solid #b8b8b8; padding-left: 8px; line-height: 21px; display: flex; justify-content: space-between; }
.st-sel-ar { width: 15px; border-left: 1px solid #b8b8b8; display: flex; align-items: center; justify-content: center; }
.st-sel-ar svg { width: 7px; height: 5px; }
.st-grip { width: 12px; height: 12px; margin-left: 7px; align-self: flex-end; }

/* watermark */
.wm { position: absolute; left: 1634px; top: 976px; width: 205px; height: 62px; pointer-events: none; }
.wm-logo { position: absolute; left: 0; top: 1px; width: 58px; height: 58px; }
.wm-cn { position: absolute; left: 69px; top: -2px; font-size: 29px; line-height: 36px; font-weight: 700; color: rgba(70, 190, 130, .55); white-space: nowrap; }
.wm-en { position: absolute; left: 57px; top: 34px; font-family: "Liberation Sans", sans-serif; font-size: 15.800px; line-height: 22px; color: rgba(90, 190, 190, .32); white-space: nowrap; }
```
